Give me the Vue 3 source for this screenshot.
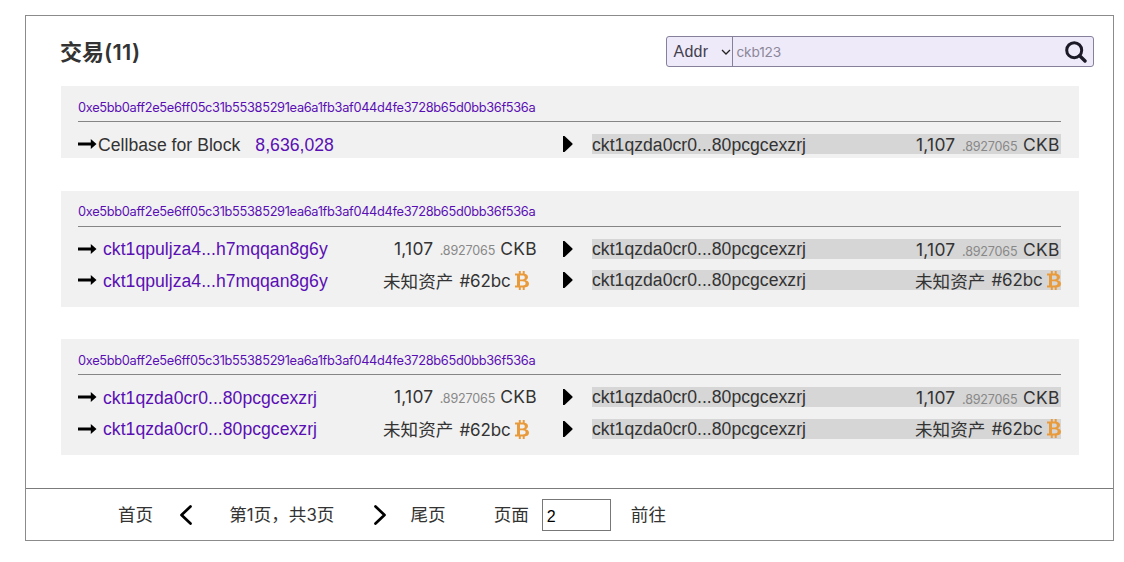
<script setup>
const hash = '0xe5bb0aff2e5e6ff05c31b55385291ea6a1fb3af044d4fe3728b65d0bb36f536a'
const miner = 'ckt1qzda0cr0...80pcgcexzrj'
const sender = 'ckt1qpuljza4...h7mqqan8g6y'
const transactions = [
  { id: 1, rows: [{ block: '8,636,028' }] },
  { id: 2, rows: [{ from: sender }, { from: sender, asset: true }] },
  { id: 3, rows: [{ from: miner }, { from: miner, asset: true }] },
]
</script>

<template>
  <main class="panel">
    <header class="head">
      <h1>交易<span>(11)</span></h1>
      <div class="search">
        <div class="kind">
          <span>Addr</span>
          <svg width="10" height="8" viewBox="0 0 10 8"><path d="M1 2 L5 6 L9 2" fill="none" stroke="#222" stroke-width="1.3" /></svg>
        </div>
        <span class="hint">ckb123</span>
        <svg class="lens" width="22" height="22" viewBox="0 0 22 22">
          <circle cx="9.2" cy="9.2" r="7.5" fill="none" stroke="#1d1a28" stroke-width="3" />
          <path d="M14.7 14.7 L20 20" stroke="#1d1a28" stroke-width="3.4" stroke-linecap="round" />
        </svg>
      </div>
    </header>

    <section class="list">
      <article v-for="tx in transactions" :key="tx.id" class="tx" :class="{ cellbase: tx.id === 1 }">
        <div class="hash"><a>{{ hash }}</a></div>
        <div v-for="(row, i) in tx.rows" :key="i" class="row">
          <div class="from">
            <svg class="arrow" width="19" height="12" viewBox="0 0 19 12"><path d="M0 4.5 H12.8 V1 L18.5 6 L12.8 11 V7.5 H0 Z" /></svg>
            <template v-if="row.block">
              <span class="label">Cellbase for Block</span>
              <a class="block">{{ row.block }}</a>
            </template>
            <template v-else>
              <a class="address">{{ row.from }}</a>
              <span v-if="row.asset" class="asset">未知资产 <b>#62bc</b>
                <svg class="coin" width="14" height="19" viewBox="0 0 14 19"><path fill-rule="evenodd" d="M0 2.5H3.8V0H5.8V2.5H7.7V0H9.7V2.8C12 3.2 13 4.5 13 6.1C13 7.7 12.1 8.7 10.6 9.2C12.7 9.7 14 10.8 14 12.7C14 15 12.3 16.2 9.7 16.4V19H7.7V16.5H5.8V19H3.8V16.5H0V14.6H2V4.4H0ZM5 4.5V8.4H7.3C9.1 8.4 9.8 7.7 9.8 6.4C9.8 5.1 9 4.5 7.3 4.5ZM5 10.2V14.5H7.6C9.7 14.5 10.6 13.8 10.6 12.3C10.6 10.9 9.6 10.2 7.6 10.2Z" /></svg>
              </span>
              <span v-else class="amount"><b>1,107</b><small>.8927065</small><i>CKB</i></span>
            </template>
          </div>
          <svg class="triangle" width="10" height="16" viewBox="0 0 10 16"><path d="M0 0 H1.5 L9.5 7.5 V8.5 L1.5 16 H0 Z" /></svg>
          <div class="to">
            <span>{{ miner }}</span>
            <span v-if="row.asset" class="asset">未知资产 <b>#62bc</b>
              <svg class="coin" width="14" height="19" viewBox="0 0 14 19"><path fill-rule="evenodd" d="M0 2.5H3.8V0H5.8V2.5H7.7V0H9.7V2.8C12 3.2 13 4.5 13 6.1C13 7.7 12.1 8.7 10.6 9.2C12.7 9.7 14 10.8 14 12.7C14 15 12.3 16.2 9.7 16.4V19H7.7V16.5H5.8V19H3.8V16.5H0V14.6H2V4.4H0ZM5 4.5V8.4H7.3C9.1 8.4 9.8 7.7 9.8 6.4C9.8 5.1 9 4.5 7.3 4.5ZM5 10.2V14.5H7.6C9.7 14.5 10.6 13.8 10.6 12.3C10.6 10.9 9.6 10.2 7.6 10.2Z" /></svg>
            </span>
            <span v-else class="amount"><b>1,107</b><small>.8927065</small><i>CKB</i></span>
          </div>
        </div>
      </article>
    </section>

    <footer class="pager">
      <span>首页</span>
      <svg class="prev" width="14" height="22" viewBox="0 0 14 22"><path d="M11.5 2.5 L2.5 11 L11.5 19.5" /></svg>
      <span>第<b>1</b>页，共<b>3</b>页</span>
      <svg class="next" width="14" height="22" viewBox="0 0 14 22"><path d="M2.5 2.5 L11.5 11 L2.5 19.5" /></svg>
      <span>尾页</span>
      <span class="page">页面</span>
      <span class="number">2</span>
      <span>前往</span>
    </footer>
  </main>
</template>

<style>
body { background: #fff; }
</style>

<style scoped>
* { box-sizing: border-box; }
.panel {
  width: 1089px;
  height: 526px;
  margin: 15px 0 0 25px;
  border: 1px solid #8b8b8b;
  display: flex;
  flex-direction: column;
  color: #333;
  font: 17.6px/20px "Liberation Sans", "Noto Sans CJK SC", sans-serif;
  letter-spacing: 0.03px;
  white-space: nowrap;
}
.head {
  height: 70px;
  padding: 20px 19.5px 0 34px;
  display: flex;
  justify-content: space-between;
  align-items: flex-start;
}
h1 { margin: -2px 0 0; font: bold 22px/32px "Noto Sans CJK SC", sans-serif; }
h1 span { font: 600 22px/32px Inter, sans-serif; letter-spacing: 0.25px; }
.search {
  width: 428px;
  height: 31px;
  display: flex;
  align-items: center;
  background: #efeafa;
  border: 1px solid #86809a;
  border-radius: 3px;
  padding-right: 6px;
}
.kind {
  width: 66px;
  height: 100%;
  padding: 0 1px 0 7px;
  display: flex;
  align-items: center;
  justify-content: space-between;
  border-right: 1px solid #86809a;
  font-size: 16px;
  letter-spacing: 0.25px;
  color: #43404e;
}
.hint { margin-left: 4px; font: 13.7px Inter, sans-serif; color: #8b8798; flex: 1; letter-spacing: -0.2px; }
.list {
  padding: 0 34px 0 35px;
  display: flex;
  flex-direction: column;
  gap: 32.5px;
  height: 402px;
}
.tx { background: #f1f1f1; height: 116px; padding: 0 18px 0 17px; flex: none; }
.tx.cellbase { height: 72px; }
a { color: #5a0fb4; }
.hash {
  height: 36px;
  border-bottom: 1px solid #858585;
  font: 12.8px/43px Inter, sans-serif;
  letter-spacing: -0.32px;
}
.tx:nth-child(2) .hash { line-height: 42px; }
.row { height: 20px; margin-top: 12px; display: flex; align-items: center; }
.row + .row { margin-top: 11.5px; }
.from { width: 459px; flex: none; display: flex; align-items: center; padding-top: 1px; }
.arrow { margin: -1px 6px 0 0; flex: none; }
.label { margin-left: -5px; }
.block { margin-left: 15px; }
.triangle { margin: 0 19px 0 26px; flex: none; }
.to { flex: 1; height: 20px; line-height: 21px; display: flex; background: #d6d6d6; }
.tx.cellbase .to { line-height: 22px; }
.amount, .asset { margin-left: auto; display: flex; align-items: center; }
.amount { width: 145px; font-family: Inter, sans-serif; align-items: baseline; }
.from .amount { width: 144px; padding-left: 1px; padding-top: 1px; }
.amount b, .asset b, .pager b { font-weight: 400; }
.amount b { font-size: 17.4px; width: 46px; letter-spacing: 0.25px; }
.amount small { font-size: 12.6px; color: #888; width: 61px; letter-spacing: -0.2px; }
.amount i { font-style: normal; font-size: 17.4px; letter-spacing: 0.3px; }
.asset { width: 146px; font-family: "Noto Sans CJK SC", sans-serif; letter-spacing: 0; }
.asset b { font-family: Inter, sans-serif; font-size: 17px; margin: 1px 4px 0 6px; letter-spacing: -0.1px; }
.from .asset { margin-right: 8px; }
.coin { fill: #e99b3c; flex: none; }
.pager {
  height: 52px;
  border-top: 1px solid #7b7b7b;
  padding-left: 92px;
  display: flex;
  align-items: center;
  letter-spacing: 0;
}
.pager b { font-family: Inter, sans-serif; font-size: 16.8px; }
.prev, .next { fill: none; stroke: #000; stroke-width: 2.7; stroke-linecap: round; stroke-linejoin: round; }
.prev { margin: 0 36px 0 26px; }
.next { margin: 0 23px 0 39px; }
.page { margin-left: 48px; }
.number {
  width: 69px;
  height: 32px;
  border: 1px solid #777;
  margin: 0 20px 0 13px;
  padding-left: 4px;
  line-height: 33px;
  color: #000;
  font-size: 16px;
}
</style>
